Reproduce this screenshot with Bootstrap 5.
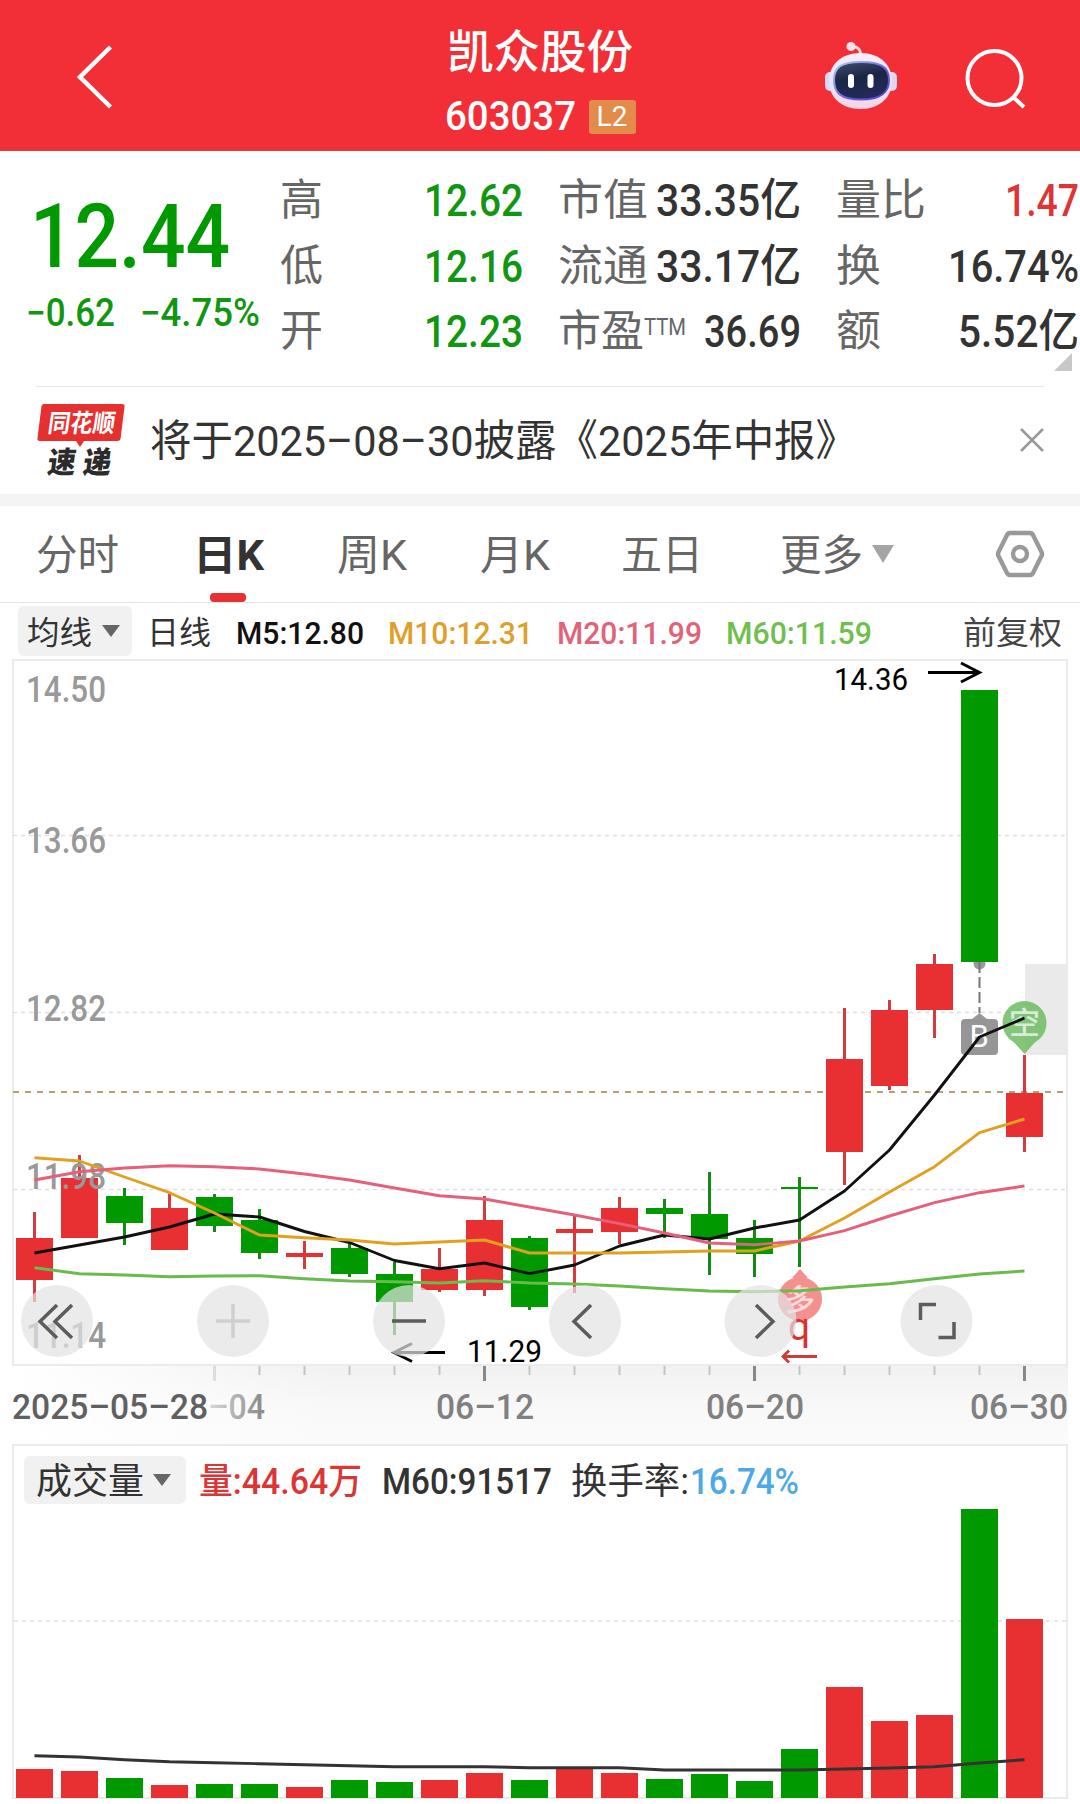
<!DOCTYPE html>
<html lang="zh-CN">
<head>
<meta charset="utf-8">
<meta name="viewport" content="width=device-width, initial-scale=1">
<title>凯众股份 603037</title>
<link href="https://cdn.jsdelivr.net/npm/bootstrap@5.3.0/dist/css/bootstrap.min.css" rel="stylesheet">
<style>
  body { font-family: Roboto, "Noto Sans CJK SC", sans-serif; width: 1080px; height: 1804px; overflow: hidden; background: #fff; color: #333; line-height: 1; }
  svg { display: block; overflow: visible; flex-shrink: 0; }
  .fit { display: inline-block; white-space: nowrap; transform-origin: 0 50%; flex-shrink: 0; }
  .down { color: #119611; } .up { color: #dc3535; } .tone { color: #666; }
  .topbar { height: 151px; background: #f22f37; color: #fff; border-bottom: 1px solid #c0474c; }
  .side { width: 400px; padding-top: 3px; }
  .stock-name { font-size: 46px; font-weight: 500; height: 46px; }
  .stock-code { font-size: 40px; font-weight: 500; }
  .lv2 { width: 47px; height: 34px; background: #e28b4a; border-radius: 3px; font-size: 28px; }
  .quote { height: 235px; }
  .price-col { width: 280px; padding-left: 26px; }
  .price { font-size: 89px; font-weight: 500; color: #009a00; height: 63px; line-height: 66px; padding-left: 4px; }
  .delta { font-size: 38px; font-weight: 500; }
  .stat-col { width: 243px; padding-top: 17px; }
  .stat { height: 65.5px; font-size: 43.5px; }
  .stat .val { font-size: 45px; font-weight: 500; }
  .ttm { font-size: 24px; font-weight: 400; align-self: flex-start; margin-top: 16px; }
  .rule { height: 1px; background: #e6e6e6; margin: 0 36px; }
  .notice { height: 107px; padding: 0 36px; }
  .notice-logo { width: 90px; height: 74px; margin-right: 24px; }
  .notice-text { font-size: 43px; }
  .band { height: 12px; background: #f4f4f4; }
  .tabs-k { height: 97px; border-bottom: 1px solid #e4e4e4; font-size: 42px; color: #666; padding-left: 36px; }
  .tab-k { height: 96px; position: relative; }
  .tab-k .fit { padding-top: 3px; }
  .tab-k.on { color: #333; font-weight: 700; left: -4px; }
  .tab-k.on::after { content: ""; position: absolute; left: 17px; bottom: 0; width: 36px; height: 9px; border-radius: 4px; background: #e83032; }
  .ma { height: 56px; padding-left: 18px; font-size: 32px; font-weight: 500; }
  .ma .fit, .vol-head .fit { padding-top: 3px; }
  .pill { background: #f1f1f1; border-radius: 6px; }
  .cjk { font-weight: 400; }
  .vol { margin: 0 12px; height: 355px; border: 2px solid #ebebeb; }
  .vol-head { height: 63px; padding: 10px 0 5px 10px; font-size: 36px; font-weight: 500; }
</style>
<script src="https://cdn.jsdelivr.net/npm/bootstrap@5.3.0/dist/js/bootstrap.bundle.min.js"></script>
</head>
<body>
<header class="topbar d-flex">
  <div class="side d-flex align-items-center">
    <svg width="50" height="70" style="margin-left:70px" viewBox="70 42 50 70"><path d="M110.500 47 80 77 110.500 107" fill="none" stroke="#fff" stroke-width="4.500"/></svg>
  </div>
  <div class="flex-fill d-flex flex-column align-items-center" style="padding-top:29px">
    <div class="stock-name"><span class="fit" data-w="186">凯众股份</span></div>
    <div class="d-flex align-items-center" style="margin-top:22px;gap:13px">
      <span class="stock-code"><span class="fit" data-w="131">603037</span></span>
      <span class="lv2 d-flex align-items-center justify-content-center">L2</span>
    </div>
  </div>
  <div class="side d-flex align-items-center">
    <svg width="255" height="90" viewBox="825 32 255 90" style="margin-left:145px">
      <defs>
        <linearGradient id="shell" x1="0" y1="0" x2="0" y2="1"><stop offset="0" stop-color="#fbeff8"/><stop offset=".55" stop-color="#e6e4fa"/><stop offset="1" stop-color="#f7d5e4"/></linearGradient>
        <linearGradient id="visor" x1="0" y1="0" x2=".3" y2="1"><stop offset="0" stop-color="#44506f"/><stop offset=".5" stop-color="#1b2546"/><stop offset="1" stop-color="#232a5a"/></linearGradient>
        <linearGradient id="rim" x1="0" y1="0" x2="1" y2="1"><stop offset="0" stop-color="#a9d4f4"/><stop offset=".6" stop-color="#6a5bd8"/><stop offset="1" stop-color="#5a3fd0"/></linearGradient>
      </defs>
      <path d="M851 47q9-2 10 9" fill="none" stroke="#fbdce4" stroke-width="3"/><circle cx="851" cy="46.500" r="4.500" fill="#fce0e8"/>
      <rect x="825" y="72" width="12" height="19" rx="5" fill="#dcd6f5"/><rect x="885" y="72" width="12" height="19" rx="5" fill="#dcd6f5"/>
      <path d="M860.500 53C880 53 892 65 892 81S880 109 860.500 109 829 97 829 81 841 53 860.500 53z" fill="url(#shell)"/>
      <path d="M861 62C881 62 889 67 889 80S881 99.500 861 99.500 834 93 834 80 841 62 861 62z" fill="url(#visor)" stroke="url(#rim)" stroke-width="2"/>
      <rect x="848" y="74" width="6" height="14" rx="3" fill="#fff"/><rect x="867.500" y="74" width="6" height="14" rx="3" fill="#fff"/>
      <circle cx="994.500" cy="78" r="27" fill="none" stroke="#fff" stroke-width="4"/><path d="M1013 97l11 10" stroke="#fff" stroke-width="4"/>
    </svg>
  </div>
</header>

<section class="quote d-flex position-relative">
  <div class="price-col">
    <div class="price" style="margin-top:53px"><span class="fit" data-w="200">12.44</span></div>
    <div class="delta down d-flex" style="margin-top:27px;gap:25px"><span class="fit" data-w="89">−0.62</span><span class="fit" data-w="120">−4.75%</span></div>
  </div>
  <div class="stat-col" style="margin-right:35px">
    <div class="stat d-flex align-items-center justify-content-between"><span class="fit tone" data-w="43">高</span><span class="fit val down" data-w="99">12.62</span></div>
    <div class="stat d-flex align-items-center justify-content-between"><span class="fit tone" data-w="43">低</span><span class="fit val down" data-w="99">12.16</span></div>
    <div class="stat d-flex align-items-center justify-content-between"><span class="fit tone" data-w="43">开</span><span class="fit val down" data-w="99">12.23</span></div>
  </div>
  <div class="stat-col" style="margin-right:35px">
    <div class="stat d-flex align-items-center justify-content-between"><span class="fit tone" data-w="90">市值</span><span class="fit val" data-w="145">33.35亿</span></div>
    <div class="stat d-flex align-items-center justify-content-between"><span class="fit tone" data-w="90">流通</span><span class="fit val" data-w="145">33.17亿</span></div>
    <div class="stat d-flex align-items-center"><span class="fit tone" data-w="86">市盈</span><span class="fit tone ttm" data-w="42">TTM</span><span class="fit val ms-auto" data-w="97">36.69</span></div>
  </div>
  <div class="stat-col">
    <div class="stat d-flex align-items-center justify-content-between"><span class="fit tone" data-w="90">量比</span><span class="fit val up" data-w="74">1.47</span></div>
    <div class="stat d-flex align-items-center justify-content-between"><span class="fit tone" data-w="45">换</span><span class="fit val" data-w="131">16.74%</span></div>
    <div class="stat d-flex align-items-center justify-content-between"><span class="fit tone" data-w="45">额</span><span class="fit val" data-w="121">5.52亿</span></div>
  </div>
  <svg class="position-absolute bottom-0 end-0" width="26" height="34" viewBox="0 0 26 34"><path d="M18 1v18H0z" fill="#c8c8c8"/></svg>
</section>
<div class="rule"></div>

<section class="notice d-flex align-items-center">
  <svg class="notice-logo" viewBox="36 404 90 74">
    <path d="M44 404h78q3 0 2.500 3l-4 32q-.5 2-3 2H84l-4 6-4-6H40q-3 0-2.500-3l4-32q.5-2 2.500-2z" fill="#e5302f"/>
    <text transform="translate(47 432) skewX(-8)" font-size="25" font-weight="700" fill="#fff" textLength="67" lengthAdjust="spacingAndGlyphs">同花顺</text>
    <text transform="translate(46.500 473) skewX(-8)" font-size="30" font-weight="900" fill="#2b2b2b" textLength="28" lengthAdjust="spacingAndGlyphs">速</text>
    <text transform="translate(82 473) skewX(-8)" font-size="30" font-weight="900" fill="#2b2b2b" textLength="28" lengthAdjust="spacingAndGlyphs">递</text>
  </svg>
  <span class="fit notice-text" data-w="707" style="padding-top:2px">将于2025–08–30披露《2025年中报》</span>
  <svg class="ms-auto" width="24" height="24" viewBox="0 1 24 24"><path d="M1 1l22 22M23 1 1 23" stroke="#999" stroke-width="2.500"/></svg>
</section>
<div class="band"></div>

<nav class="tabs-k d-flex">
  <div class="tab-k d-flex align-items-center" style="width:161px"><span class="fit" data-w="83">分时</span></div>
  <div class="tab-k on d-flex align-items-center" style="width:140px"><span class="fit" data-w="71">日K</span></div>
  <div class="tab-k d-flex align-items-center" style="width:143px"><span class="fit" data-w="70">周K</span></div>
  <div class="tab-k d-flex align-items-center" style="width:141px"><span class="fit" data-w="70">月K</span></div>
  <div class="tab-k d-flex align-items-center" style="width:159px"><span class="fit" data-w="82">五日</span></div>
  <div class="tab-k d-flex align-items-center" style="width:216px;gap:9px"><span class="fit" data-w="83">更多</span><svg width="22" height="18" viewBox="0 0 22 18"><path d="M0 0h22L11 18z" fill="#a5a5a5"/></svg></div>
  <div class="tab-k d-flex align-items-center"><svg width="48" height="48" viewBox="0 0 48 48"><path d="M14 3h20q2 0 3 2l8.500 17q1 2 0 4L37 43q-1 2-3 2H14q-2 0-3-2L2.500 26q-1-2 0-4L11 5q1-2 3-2z" fill="none" stroke="#999" stroke-width="4.400"/><circle cx="24" cy="24" r="7" fill="none" stroke="#999" stroke-width="4.400"/></svg></div>
</nav>

<section class="ma d-flex align-items-center">
  <div class="pill cjk d-flex align-items-center" style="width:114px;height:50px;padding-left:9px;gap:10px"><span class="fit" data-w="65">均线</span><svg width="18" height="12" viewBox="0 0 18 12"><path d="M0 0h18L9 12z" fill="#666"/></svg></div>
  <span class="fit cjk" data-w="64" style="margin-left:15px">日线</span>
  <span class="d-flex" style="margin-left:25px;color:#111"><span class="fit" data-w="128">M5:12.80</span></span>
  <span class="d-flex" style="margin-left:24px;color:#dda02a"><span class="fit" data-w="145">M10:12.31</span></span>
  <span class="d-flex" style="margin-left:24px;color:#e0637a"><span class="fit" data-w="145">M20:11.99</span></span>
  <span class="d-flex" style="margin-left:24px;color:#70bf4e"><span class="fit" data-w="146">M60:11.59</span></span>
  <span class="ms-auto cjk" style="margin-right:18px;color:#444"><span class="fit" data-w="99">前复权</span></span>
</section>

<svg id="kline" width="1080" height="785" viewBox="0 659 1080 785">
  <defs>
    <linearGradient id="strip" x1="0" y1="0" x2="0" y2="1"><stop offset="0" stop-color="#f1f1f1"/><stop offset=".5" stop-color="#f8f8f8"/><stop offset="1" stop-color="#fbfbfb"/></linearGradient>
    <linearGradient id="veil" x1="0" y1="0" x2="1" y2="0"><stop offset="0" stop-color="#fff"/><stop offset="1" stop-color="#fff" stop-opacity="0"/></linearGradient>
    <linearGradient id="fade" gradientUnits="userSpaceOnUse" x1="205" y1="0" x2="264" y2="0"><stop offset="0" stop-color="#ddd"/><stop offset="1" stop-color="#888"/></linearGradient>
  </defs>
  <rect x="13" y="1366" width="1055" height="78" fill="url(#strip)"/><rect x="12" y="1366" width="330" height="78" fill="url(#veil)"/>
  <rect x="13" y="660" width="1054" height="705" fill="#fff" stroke="#ebebeb" stroke-width="2"/>
  <g stroke="#e0e0e0" stroke-width="1.500" stroke-dasharray="4 4"><path d="M13 835.500H1066M13 1012.500H1066M13 1189.500H1066"/></g>
  <path d="M13 1092H1066" stroke="#b7a070" stroke-width="1.800" stroke-dasharray="6 6"/>
  <rect x="1025" y="964" width="43" height="91" fill="#eaeaea"/>
  <g id="candles"></g>
  <circle cx="979.500" cy="963.500" r="6" fill="#999"/><rect x="961" y="690" width="37" height="272" fill="#009a00"/>
  <path d="M979.500 962V1013" stroke="#777" stroke-width="2" stroke-dasharray="11 4"/>
  <path d="M972 1019l7.500-6 7.500 6z" fill="#999"/><rect x="961" y="1019" width="37" height="36" rx="4" fill="#969696"/>
  <text x="969.500" y="1047" font-size="31" fill="#fff">B</text>
  <g opacity=".85"><path d="M1012 1040l12.500 14 12.500-14z" fill="#6fbb65"/><circle cx="1024.500" cy="1023" r="22" fill="#6fbb65"/></g>
  <text x="1009" y="1034" font-size="31" fill="#fff" fill-opacity=".7" font-weight="500">空</text>
  <path d="M792 1278l8-9 8 9z" fill="#f59090"/><circle cx="800" cy="1299" r="22" fill="#f59090"/>
  <text x="785" y="1310" font-size="30" fill="#fff" fill-opacity=".7" font-weight="500">多</text>
  <g font-size="36" font-weight="500" fill="#999">
    <text x="26" y="702" textLength="80" lengthAdjust="spacingAndGlyphs">14.50</text>
    <text x="26" y="853" textLength="80" lengthAdjust="spacingAndGlyphs">13.66</text>
    <text x="26" y="1021" textLength="80" lengthAdjust="spacingAndGlyphs">12.82</text>
    <text x="26" y="1189" textLength="80" lengthAdjust="spacingAndGlyphs">11.98</text>
    <text x="26" y="1348" textLength="80" lengthAdjust="spacingAndGlyphs">11.14</text>
  </g>
  <g id="averages" fill="none" stroke-width="2.900" stroke-linejoin="round"></g>
  <text x="799" y="1340" text-anchor="middle" font-size="39" fill="#d93030">q</text>
  <path d="M817 1356.500H783M789 1350.500l-6 6 6 6" fill="none" stroke="#d23a3a" stroke-width="2.800"/>
  <g font-size="31.500" fill="#000"><text x="834" y="690" textLength="74" lengthAdjust="spacingAndGlyphs">14.36</text><text x="467" y="1362" textLength="75" lengthAdjust="spacingAndGlyphs">11.29</text></g>
  <path d="M928 672.500h51M961 663l18.500 9.500L961 682M445 1352.500h-50M412 1343.500l-18 9 18 9" fill="none" stroke="#000" stroke-width="2.900"/>
  <g fill="#e3e3e3" fill-opacity=".71"><circle cx="57" cy="1321" r="36"/><circle cx="233" cy="1321" r="36"/><circle cx="409" cy="1321" r="36"/><circle cx="585" cy="1321" r="36"/><circle cx="760.500" cy="1321" r="36"/><circle cx="936.500" cy="1321" r="36"/></g>
  <g fill="none" stroke="#5c5c5c" stroke-width="3.500">
    <path d="M57 1305 40 1321.500 57 1338M72 1305 55 1321.500 72 1338M392 1321H426M591 1305 574 1321.500 591 1338M756 1305 773 1321.500 756 1338M936 1304.500H920.500V1320M938.500 1337.500H954V1322"/>
    <path d="M216 1321H250M233 1304V1338" stroke="#cfcfcf"/>
  </g>
  <g id="ticks"></g>
  <g font-size="35" font-weight="500" fill="#808080">
    <text x="12" y="1419" fill="#606060" textLength="196" lengthAdjust="spacingAndGlyphs">2025–05–28</text>
    <text x="208" y="1419" fill="url(#fade)" textLength="57" lengthAdjust="spacingAndGlyphs">–04</text>
    <text x="436" y="1419" textLength="98" lengthAdjust="spacingAndGlyphs">06–12</text>
    <text x="706" y="1419" textLength="98" lengthAdjust="spacingAndGlyphs">06–20</text>
    <text x="970" y="1419" textLength="98" lengthAdjust="spacingAndGlyphs">06–30</text>
  </g>
</svg>

<section class="vol">
  <div class="vol-head d-flex align-items-center">
    <div class="pill cjk d-flex align-items-center" style="width:162px;height:48px;padding-left:12px;gap:9px"><span class="fit" data-w="108">成交量</span><svg width="18" height="12" viewBox="0 0 18 12"><path d="M0 0h18L9 12z" fill="#666"/></svg></div>
    <span class="up d-flex" style="margin-left:13px"><span class="fit" data-w="163">量:44.64万</span></span>
    <span class="d-flex" style="margin-left:20px"><span class="fit" data-w="170">M60:91517</span></span>
    <span class="d-flex" style="margin-left:19px"><span class="fit" data-w="118" style="font-weight:400">换手率:</span></span>
    <span class="d-flex" style="margin-left:1px;color:#4ca9e6"><span class="fit" data-w="109">16.74%</span></span>
  </div>
  <svg width="1052" height="288" viewBox="14 1509 1052 288">
    <path d="M14 1621H1066" stroke="#e8e8e8" stroke-width="2" stroke-dasharray="4 4"/>
    <g id="volumes"></g><g id="volavg" fill="none" stroke="#333" stroke-width="2.900"></g>
  </svg>
</section>

<script>
  const UP = '#e83032', DOWN = '#009a00', X0 = 34.5, STEP = 45;
  const x = i => X0 + i * STEP;
  // One row per day: [direction, body top, body bottom, wick top, wick bottom, volume top]
  const days = [
    [1,1238,1280,1212,1302,1769],[1,1178,1238,1155,1238,1771],[0,1196,1223,1188,1245,1778],[1,1208,1250,1194,1250,1785],
    [0,1197,1226,1194,1232,1784],[0,1220,1253,1209,1259,1784],[1,1253,1257,1241,1269,1787],[0,1248,1274,1242,1277,1780],
    [0,1274,1302,1262,1335,1782],[1,1269,1290,1248,1292,1780],[1,1220,1290,1196,1296,1773],[0,1238,1307,1236,1310,1780],
    [1,1229,1233,1216,1293,1769],[1,1208,1232,1197,1244,1773],[0,1208,1214,1199,1238,1779],[0,1214,1239,1172,1275,1774],
    [0,1238,1254,1220,1277,1781],[0,1187,1189,1177,1267,1749],[1,1059,1152,1008,1185,1687],[1,1010,1086,1000,1090,1721],
    [1,964,1010,954,1038,1715],[0,690,962,690,962,1509],[1,1093,1137,1055,1152,1619]];
  const lines = {
    '#68bb4c': [1267.7,1273.7,1275,1276.7,1276,1275.7,1278.7,1281,1281.7,1283,1280.7,1283,1284,1286,1288.7,1291,1291.7,1290.7,1287,1283.7,1278.7,1274,1271],
    '#111111': [1253,1245,1237,1227,1214,1217,1231.5,1242.5,1260.5,1268.7,1263,1273.7,1265,1246,1235,1239,1228,1220,1191,1150,1095,1037,1018],
    '#e0a020': [1157.7,1161,1177,1192.7,1213,1235,1237.7,1240,1244,1242,1240,1253,1253,1253,1252,1251,1251,1241,1218,1192,1166.7,1132.7,1119],
    '#e5607a': [1180,1171.7,1168,1165.7,1166.7,1169,1174,1180,1188,1195.7,1199,1207,1215,1223.7,1233,1243,1244.7,1241,1230.7,1216,1202.7,1192.7,1186]
  };
  const volLine = [1755.7,1757,1759.7,1761.7,1762.7,1763.7,1764.7,1765.7,1766.7,1766.7,1766.7,1767.7,1767.7,1767.7,1770,1770,1770,1770,1769,1768,1766.7,1763,1759.7];
  const poly = (a, c) => `<polyline points="${a.map((v, i) => x(i) + ',' + v).join(' ')}"${c ? ` stroke="${c}"` : ''}/>`;
  const put = (id, html) => document.getElementById(id).innerHTML = html;
  put('candles', days.map(([u, t, b, wt, wb], i) => {
    const c = u ? UP : DOWN, w = u ? '#d23c3e' : '#138a13';
    return `<rect x="${x(i) - 1.5}" y="${wt}" width="3" height="${wb - wt}" fill="${w}"/><rect x="${x(i) - 18.5}" y="${t}" width="37" height="${b - t}" fill="${c}"/>`;
  }).join(''));
  put('averages', Object.entries(lines).map(([c, a]) => poly(a, c)).join(''));
  put('volumes', days.map((d, i) => `<rect x="${x(i) - 18.5}" y="${d[5]}" width="37" height="${1798 - d[5]}" fill="${d[0] ? UP : DOWN}"/>`).join(''));
  put('volavg', poly(volLine));
  let t = '';
  for (let i = 4; i < 23; i++) {
    const major = (i - 4) % 6 === 0;
    t += `<rect x="${x(i) - (major ? 1.5 : 1)}" y="1366" width="${major ? 3 : 2}" height="${major ? 15 : 9}" fill="${i === 4 ? '#ddd' : major ? '#888' : '#c4c4c4'}"/>`;
  }
  put('ticks', t);
  // Condense each label to the column width it is given
  document.querySelectorAll('.fit').forEach(e => {
    const w = +e.dataset.w, n = e.getBoundingClientRect().width;
    e.style.transform = `scaleX(${w / n})`;
    e.style.marginRight = (w - n) + 'px';
  });
</script>
</body>
</html>
